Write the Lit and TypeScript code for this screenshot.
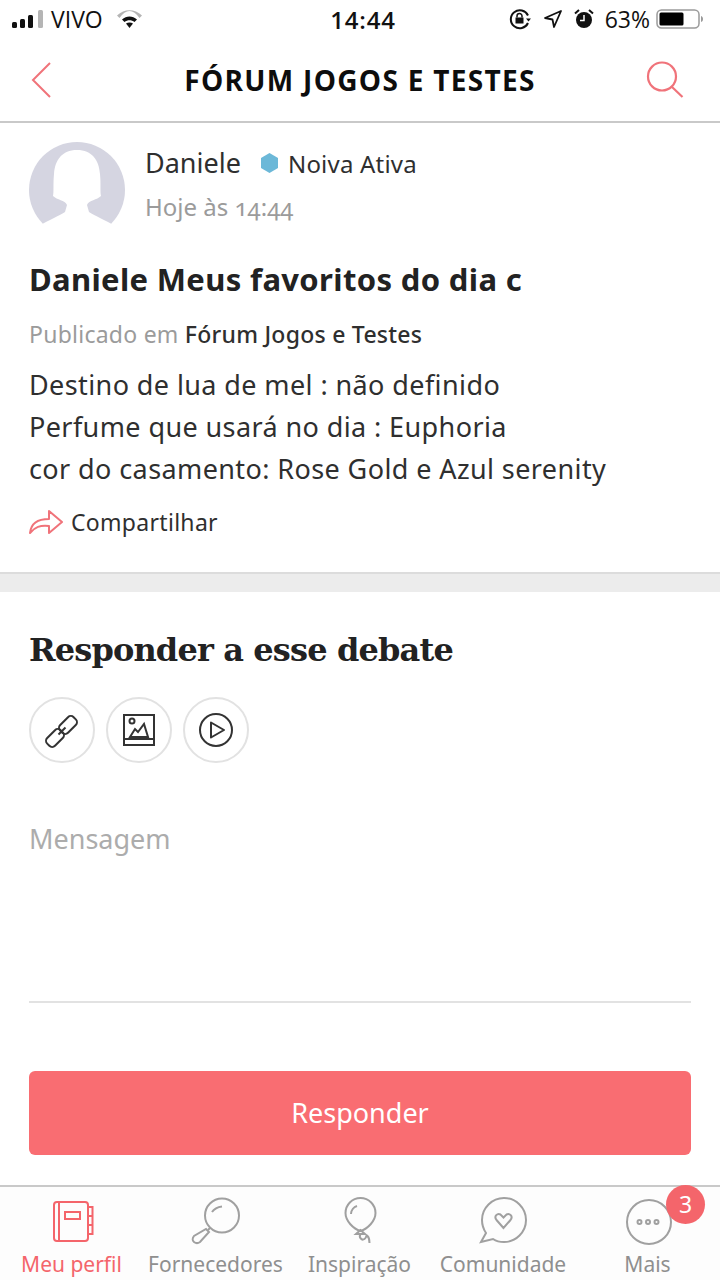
import { LitElement, css, html, svg } from "lit";
import { customElement } from "lit/decorators.js";

const tabs = [
  {
    label: "Meu perfil",
    active: true,
    icon: svg`<rect x="9" y="5" width="34" height="39" rx="3"/><path d="M14 5v39"/><rect x="20" y="15" width="15" height="7"/><path d="M43 10h4.500v9H43M43 19h4.500v9H43M43 28h4.500v9H43"/>`,
  },
  {
    label: "Fornecedores",
    icon: svg`<circle cx="33" cy="18.500" r="17"/><path d="M23 15c2-3 6-5 10-5.500M21 31l-2 2"/><path d="M17 32l3 3-9 10c-2 1.500-4 1.500-6 0s-1.500-4 0-6z"/>`,
  },
  {
    label: "Inspiração",
    icon: svg`<path d="M27.500 1C19 1 12.500 8 12.500 16c0 8 8 16 15 18 7-2 15-10 15-18 0-8-6.500-15-15-15z"/><path d="M18 17c0-4 3-7 6-8M27.500 33l-4.500 4h9zM27.500 37c-2 3 1 7 4 5s1-5 3-3 2 4 2 7"/>`,
  },
  {
    label: "Comunidade",
    icon: svg`<path d="M28 1C16 1 6 11 6 23c0 5 2 10 4 13l-5 9 12-3c3 2 7 3 11 3 12 0 22-10 22-22S40 1 28 1z"/><path d="M27.500 31l-7-8c-3-4 1-7 4-5.500l3 3 3-3c3-1.500 7 1.500 4 5.500z"/>`,
  },
  {
    label: "Mais",
    badge: "3",
    icon: svg`<circle cx="28" cy="25" r="22"/><circle cx="18.500" cy="25" r="2"/><circle cx="27" cy="25" r="2"/><circle cx="35.500" cy="25" r="2"/>`,
  },
];

@customElement("app-root")
export class AppRoot extends LitElement {
  static styles = css`
    :host {
      display: flex;
      flex-direction: column;
      width: 720px;
      height: 1280px;
      overflow: hidden;
      background: #fff;
      color: #2f2f2f;
      font-family: "Noto Sans", "Open Sans", sans-serif;
    }
    .status {
      height: 40px;
      flex: none;
      box-sizing: border-box;
      display: grid;
      grid-template-columns: 1fr auto 1fr;
      align-items: center;
      padding: 0 12px 2px;
      font-family: "Open Sans", sans-serif;
      font-size: 23px;
      color: #111;
    }
    .status-left,
    .status-right {
      display: flex;
      align-items: center;
    }
    .status-right {
      justify-content: flex-end;
      padding-right: 4px;
    }
    .carrier {
      margin-left: 7px;
      margin-right: 13px;
    }
    .clock {
      font-weight: 600;
      font-size: 24px;
      letter-spacing: 0.8px;
      margin-left: 6px;
    }
    .lock {
      margin-right: 13px;
    }
    .loc {
      margin-right: 12px;
    }
    .alarm {
      margin-right: 11px;
    }
    .battery {
      margin-left: 6px;
    }
    .nav {
      height: 83px;
      flex: none;
      display: grid;
      grid-template-columns: 1fr auto 1fr;
      align-items: center;
      padding: 0 36px 2px 31px;
      border-bottom: 2px solid #c9c9c9;
      box-sizing: border-box;
    }
    .nav h1 {
      margin: 0 0 0 5px;
      font-family: "Open Sans", sans-serif;
      font-size: 28px;
      font-weight: 700;
      color: #0d0d0d;
      letter-spacing: 1.3px;
    }
    .nav .search {
      justify-self: end;
    }
    .post {
      padding: 19px 29px 0;
      height: 451px;
      flex: none;
      box-sizing: border-box;
      border-bottom: 2px solid #dcdcdc;
    }
    .author {
      display: flex;
      gap: 20px;
    }
    .name-row {
      display: flex;
      align-items: center;
      font-size: 27px;
      line-height: 40px;
    }
    .badge-name {
      font-size: 24px;
      letter-spacing: 0.2px;
      margin: 2px 0 0 10px;
    }
    .hex {
      margin-left: 20px;
    }
    .when {
      color: #9b9b9b;
      font-size: 24px;
      font-variant-numeric: oldstyle-nums;
      line-height: 34px;
      margin-top: 6px;
    }
    .title {
      margin: 21px 0 0;
      font-size: 31px;
      letter-spacing: 0.35px;
      line-height: 40px;
      font-weight: 700;
      color: #222;
    }
    .where {
      margin-top: 18px;
      font-size: 23px;
      letter-spacing: 0.25px;
      line-height: 34px;
      color: #9b9b9b;
    }
    .where b {
      font-weight: 500;
      color: #2f2f2f;
    }
    .body {
      margin-top: 13px;
      font-size: 27px;
      letter-spacing: 0.4px;
      line-height: 42px;
    }
    .share {
      display: flex;
      align-items: center;
      gap: 8px;
      margin-top: 15px;
      font-size: 23px;
      letter-spacing: 0.3px;
      line-height: 34px;
    }
    .gap {
      height: 18px;
      flex: none;
      background: #ececec;
    }
    .reply {
      flex: 1;
      padding: 34px 29px 0;
    }
    .reply h2 {
      margin: 0;
      font-family: "DejaVu Serif", serif;
      font-size: 32px;
      letter-spacing: -0.85px;
      line-height: 48px;
      font-weight: 700;
      color: #222;
    }
    .tools {
      display: flex;
      gap: 11px;
      margin-top: 23px;
    }
    .tool {
      width: 66px;
      height: 66px;
      box-sizing: border-box;
      border: 2px solid #e2e2e2;
      border-radius: 50%;
      display: flex;
      align-items: center;
      justify-content: center;
    }
    .message {
      margin-top: 58px;
      height: 182px;
      box-sizing: border-box;
      font-size: 27px;
      line-height: 36px;
      color: #acacac;
      border-bottom: 2px solid #e2e2e2;
    }
    .send {
      display: block;
      width: 100%;
      height: 84px;
      margin-top: 68px;
      padding: 0 0 2px;
      border: none;
      border-radius: 6px;
      background: #f96d72;
      color: #fff;
      font-family: inherit;
      font-size: 27px;
    }
    .tabs {
      height: 95px;
      flex: none;
      box-sizing: border-box;
      display: grid;
      grid-template-columns: 143px 145px 143px 144px 145px;
      border-top: 2px solid #c9c9c9;
      background: #fdfdfd;
    }
    .tab {
      position: relative;
      display: flex;
      flex-direction: column;
      align-items: center;
      padding-top: 10px;
      color: #8f8f8f;
      font-size: 21px;
      line-height: 30px;
      white-space: nowrap;
    }
    .tab svg {
      fill: none;
      stroke: #a0a0a0;
      stroke-width: 2;
    }
    .tab.active {
      color: #f4656b;
    }
    .tab.active svg {
      stroke: #f4656b;
    }
    .count {
      position: absolute;
      top: -2px;
      right: 15px;
      width: 39px;
      height: 39px;
      border-radius: 50%;
      background: #f4656b;
      color: #fff;
      font-size: 23px;
      line-height: 39px;
      text-align: center;
    }
  `;

  renderStatus() {
    return html`<div class="status">
      <div class="status-left">
        <svg width="32" height="18" viewBox="0 0 32 18">
          <rect x="0" y="12" width="5" height="6" rx="1.500" fill="#111" />
          <rect x="8" y="9" width="5" height="9" rx="1.500" fill="#111" />
          <rect x="16" y="5" width="5" height="13" rx="1.500" fill="#111" />
          <rect x="26" y="0" width="5" height="18" rx="1.500" fill="#b5b5b5" />
        </svg>
        <span class="carrier">VIVO</span>
        <svg width="27" height="20" viewBox="0 0 27 20">
          <path d="M1 6.500C8.500-.5 18.500-.5 26 6.500l-2.500 2.500C17-.5 10-.5 3.500 9z" fill="#b5b5b5" />
          <path d="M6 10.500c4.500-4 10.500-4 15 0l-2.500 2.500c-3-2.500-7-2.500-10 0z" fill="#111" />
          <path d="M10 14.500c2-1.500 5-1.500 7 0L13.500 19z" fill="#111" />
        </svg>
      </div>
      <div class="clock">14:44</div>
      <div class="status-right">
        <svg class="lock" width="22" height="22" viewBox="0 0 22 22" fill="none" stroke="#111" stroke-width="2">
          <path d="M19 7.500A9 9 0 1 0 19 15" />
          <path d="M17 10.500h5l-2.500 3z" fill="#111" stroke="none" />
          <rect x="6.500" y="9.500" width="8" height="6" fill="#111" stroke="none" />
          <path d="M8 9.500V8a2.500 2.500 0 0 1 5 0v1.500" stroke-width="1.500" />
        </svg>
        <svg class="loc" width="18" height="18" viewBox="0 0 18 18" fill="none" stroke="#111" stroke-width="1.800">
          <path d="M17 1L1 8l7.500 1.500L10 17z" stroke-linejoin="round" />
        </svg>
        <svg class="alarm" width="20" height="20" viewBox="0 0 20 20">
          <circle cx="10" cy="11" r="8" fill="#111" />
          <path d="M10 6v5.500H6" stroke="#fff" stroke-width="1.500" fill="none" />
          <path d="M1 4.500L5 1M19 4.500L15 1" stroke="#111" stroke-width="2" />
        </svg>
        <span>63%</span>
        <svg class="battery" width="48" height="22" viewBox="0 0 48 22">
          <rect x="1" y="2" width="42" height="18" rx="4.500" fill="#fff" stroke="#9a9a9a" stroke-width="1.500" />
          <rect x="3.500" y="4.500" width="24" height="13" rx="1.500" fill="#000" />
          <path d="M45 8c1.500.5 2 1.500 2 3s-.5 2.500-2 3z" fill="#9a9a9a" />
        </svg>
      </div>
    </div>`;
  }

  render() {
    return html`
      ${this.renderStatus()}
      <header class="nav">
        <svg width="20" height="36" viewBox="0 0 20 36" fill="none" stroke="#f0737a" stroke-width="2">
          <path d="M19 1L2 18l17 17" />
        </svg>
        <h1>FÓRUM JOGOS E TESTES</h1>
        <svg class="search" width="38" height="38" viewBox="0 0 38 38" fill="none" stroke="#f0737a" stroke-width="2.200">
          <circle cx="16" cy="15.500" r="14" />
          <path d="M25.500 25.500l11 10.500" />
        </svg>
      </header>
      <section class="post">
        <div class="author">
          <svg width="96" height="96" viewBox="0 0 96 96">
            <circle cx="48" cy="48" r="48" fill="#d5d5e1" />
            <path d="M48 8C33 8 26 18 25 32c-1 10 0 18-1 22 4 4 12 4 14 9l-2 7c-6 4-16 8-26 14l-2 12h80l-2-12c-10-6-20-10-26-14l-2-7c2-5 10-5 14-9-1-4 0-12-1-22C70 18 63 8 48 8z" fill="#fff" />
          </svg>
          <div class="who">
            <div class="name-row">
              Daniele
              <svg class="hex" width="17" height="20" viewBox="0 0 17 20"><path d="M8.500 0l8.500 5v10l-8.500 5L0 15V5z" fill="#6cb8d8" /></svg>
              <span class="badge-name">Noiva Ativa</span>
            </div>
            <div class="when">Hoje às 14:44</div>
          </div>
        </div>
        <h3 class="title">Daniele Meus favoritos do dia c</h3>
        <div class="where">Publicado em <b>Fórum Jogos e Testes</b></div>
        <div class="body">
          Destino de lua de mel : não definido<br />
          Perfume que usará no dia : Euphoria<br />
          cor do casamento: Rose Gold e Azul serenity
        </div>
        <div class="share">
          <svg width="34" height="26" viewBox="0 0 34 26" fill="none" stroke="#f0737a" stroke-width="2">
            <path d="M1 24C2 14 9 10 20 10V2l13 11-13 11v-7C11 16 6 18 1 24z" stroke-linejoin="round" />
          </svg>
          Compartilhar
        </div>
      </section>
      <div class="gap"></div>
      <section class="reply">
        <h2>Responder a esse debate</h2>
        <div class="tools">
          <div class="tool">
            <svg width="36" height="36" viewBox="0 0 36 36" fill="none" stroke="#333" stroke-width="2">
              <rect x="14.500" y="7.500" width="19" height="11" rx="4" transform="rotate(-45 24 13)" />
              <rect x="1.500" y="20.500" width="19" height="11" rx="4" transform="rotate(-45 11 26)" />
              <path d="M14.500 22.500l7-7" />
            </svg>
          </div>
          <div class="tool">
            <svg width="32" height="32" viewBox="0 0 32 32" fill="none" stroke="#333" stroke-width="2">
              <rect x="1" y="1" width="30" height="30" />
              <path d="M1 25h30M7 23l5-8 3 3 6-8 4 13z" />
              <circle cx="9" cy="7" r="2.500" />
            </svg>
          </div>
          <div class="tool">
            <svg width="36" height="36" viewBox="0 0 36 36" fill="none" stroke="#333" stroke-width="2">
              <circle cx="18" cy="18" r="16" />
              <path d="M13 10.500l13 7.500-13 7.500z" stroke-linejoin="round" />
            </svg>
          </div>
        </div>
        <div class="message">Mensagem</div>
        <button class="send">Responder</button>
      </section>
      <nav class="tabs">
        ${tabs.map(
          (t) => html`<div class="tab ${t.active ? "active" : ""}">
            <svg width="54" height="52" viewBox="0 0 54 52">${t.icon}</svg>
            <span>${t.label}</span>
            ${t.badge ? html`<span class="count">${t.badge}</span>` : ""}
          </div>`
        )}
      </nav>
    `;
  }
}
